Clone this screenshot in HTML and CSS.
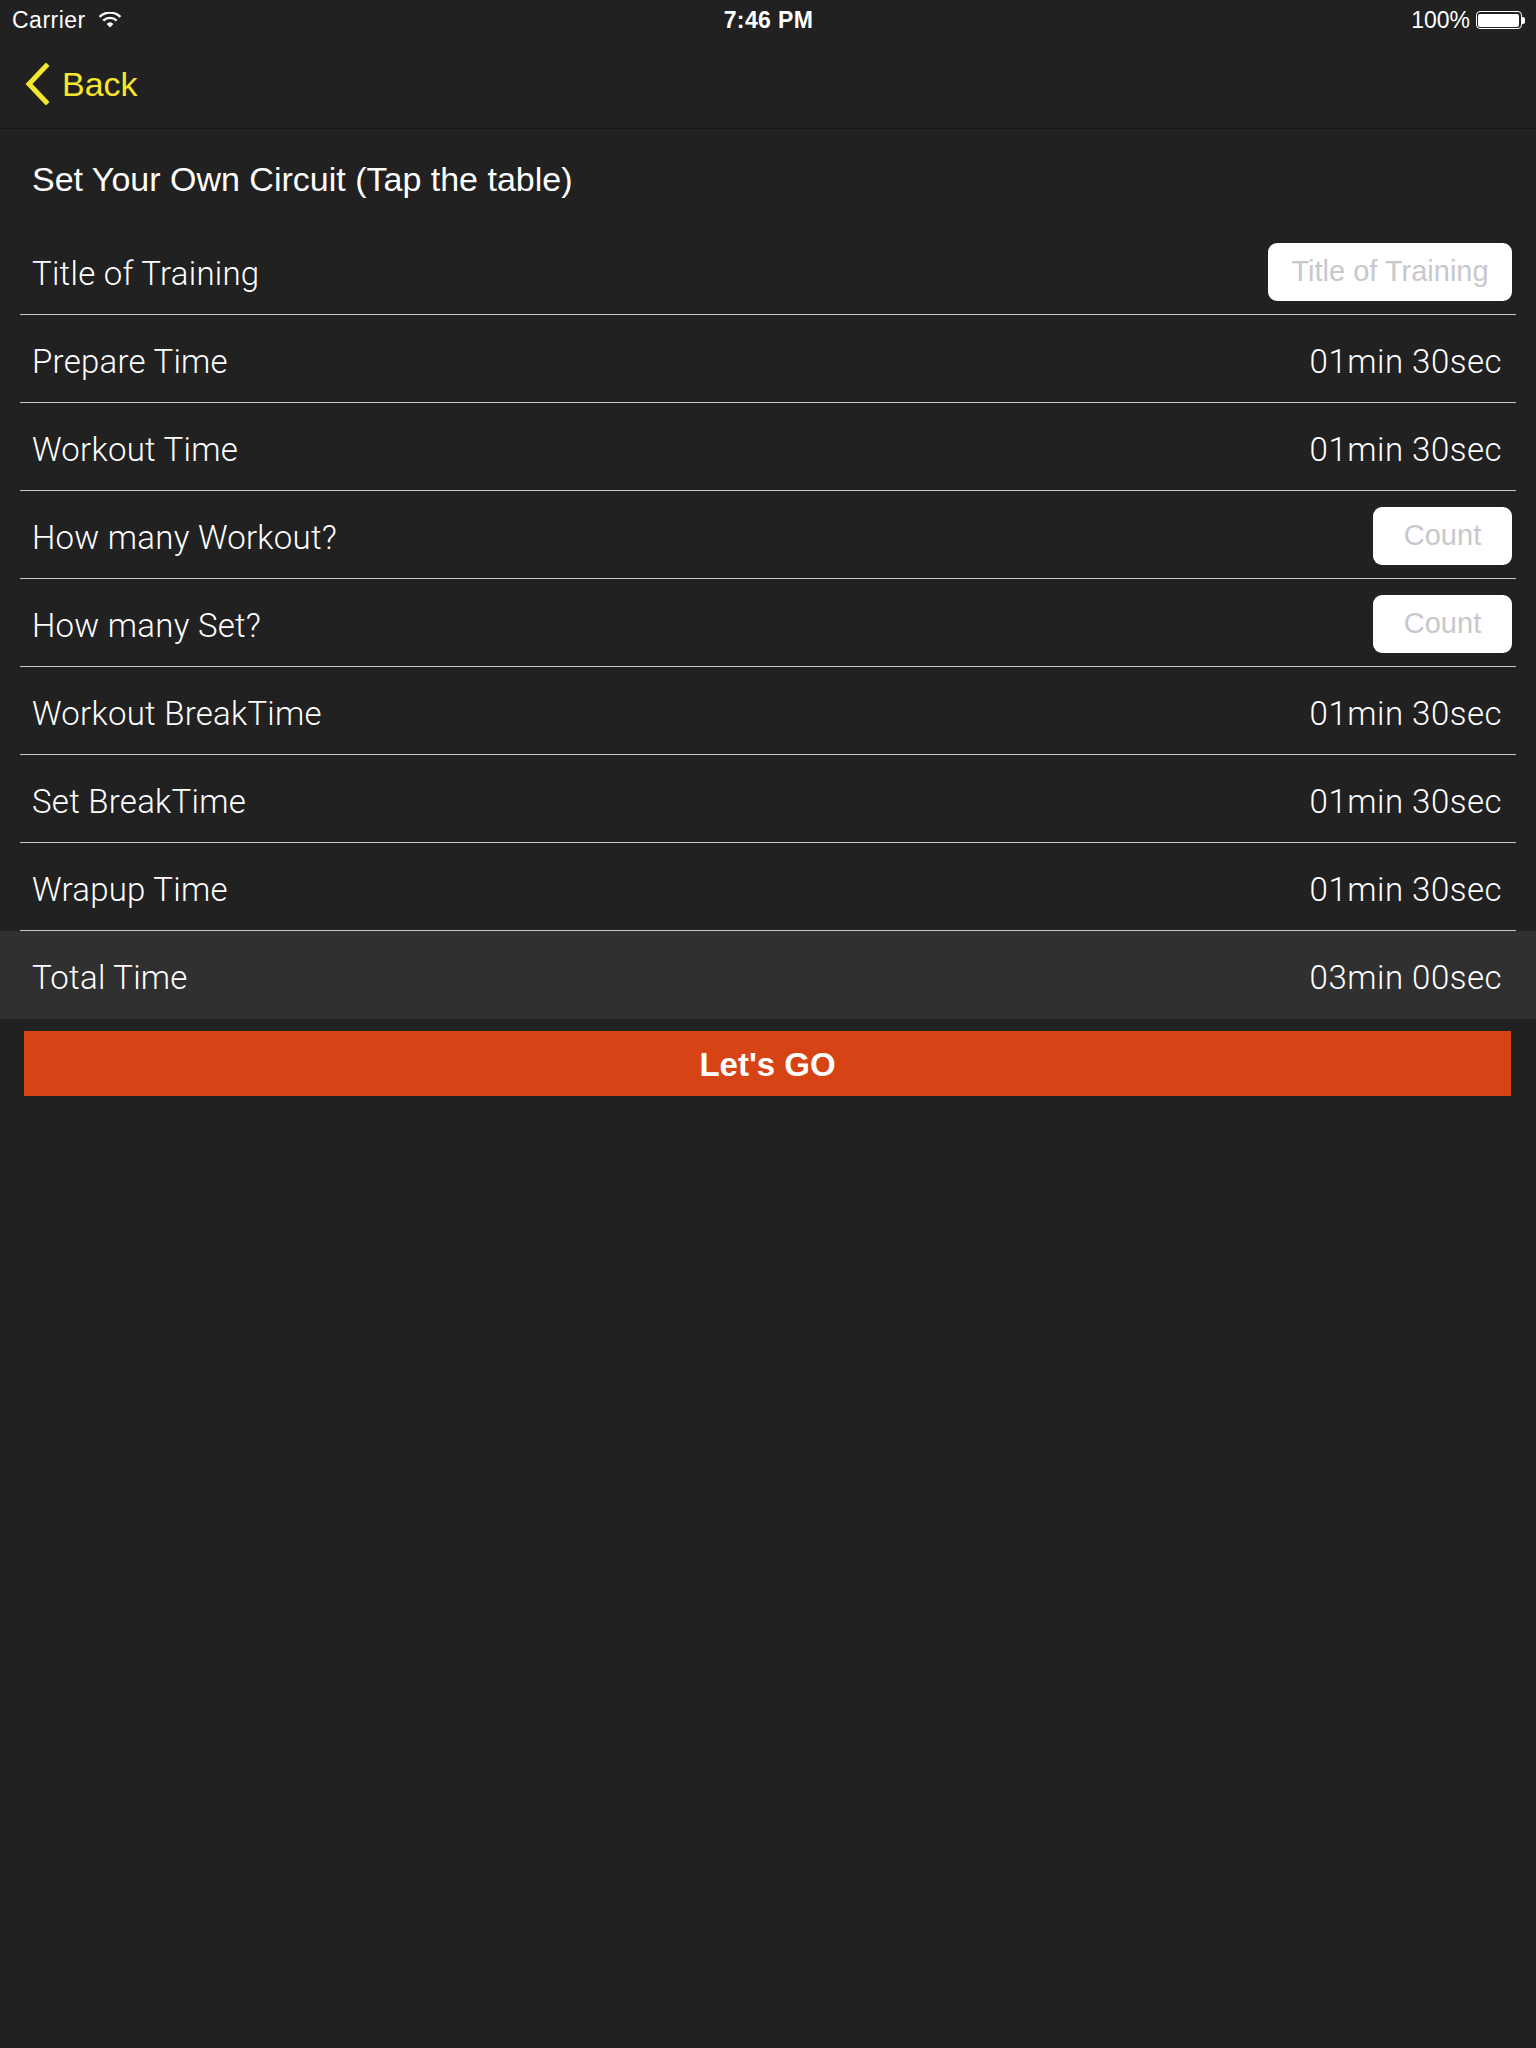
FILE: index.html
```html
<!DOCTYPE html>
<html lang="en">
<head>
<meta charset="utf-8">
<title>Set Your Own Circuit</title>
<link rel="stylesheet" href="styles.css">
</head>
<body>
<div class="screen">
  <div class="statusbar">
    <div class="sb-left">
      <span class="carrier">Carrier</span>
      <svg class="wifi" width="24" height="16" viewBox="0 0 24 16">
        <path d="M12 15.5 L8.6 11.9 A5 5 0 0 1 15.4 11.9 Z" fill="#fff"/>
        <path d="M5.3 8.6 A9.6 9.6 0 0 1 18.7 8.6" fill="none" stroke="#fff" stroke-width="2.4"/>
        <path d="M1.6 4.9 A14.8 14.8 0 0 1 22.4 4.9" fill="none" stroke="#fff" stroke-width="2.4"/>
      </svg>
    </div>
    <div class="sb-time">7:46 PM</div>
    <div class="sb-right">
      <span class="pct">100%</span>
      <span class="battery"><span class="battery-fill"></span></span>
      <span class="battery-nub"></span>
    </div>
  </div>

  <div class="navbar">
    <div class="back">
      <svg class="chevron" width="26" height="42" viewBox="0 0 26 42">
        <path d="M22 3 L5 21 L22 39" fill="none" stroke="#f7e62e" stroke-width="5" stroke-linecap="square" stroke-linejoin="miter"/>
      </svg>
      <span class="back-label">Back</span>
    </div>
  </div>

  <div class="section-title">Set Your Own Circuit (Tap the table)</div>

  <div class="table">
    <div class="row"><span class="label">Title of Training</span><span class="field field-wide">Title of Training</span></div>
    <div class="row"><span class="label">Prepare Time</span><span class="value">01min 30sec</span></div>
    <div class="row"><span class="label">Workout Time</span><span class="value">01min 30sec</span></div>
    <div class="row"><span class="label">How many Workout?</span><span class="field field-count">Count</span></div>
    <div class="row"><span class="label">How many Set?</span><span class="field field-count">Count</span></div>
    <div class="row"><span class="label">Workout BreakTime</span><span class="value">01min 30sec</span></div>
    <div class="row"><span class="label">Set BreakTime</span><span class="value">01min 30sec</span></div>
    <div class="row"><span class="label">Wrapup Time</span><span class="value">01min 30sec</span></div>
  </div>

  <div class="total-row"><span class="label">Total Time</span><span class="value">03min 00sec</span></div>

  <div class="go-button">Let's GO</div>
</div>
</body>
</html>
```

FILE: styles.css
```css
* { box-sizing: border-box; }
html, body {
  margin: 0;
  padding: 0;
  background: #212121;
}
body {
  width: 1536px;
  height: 2048px;
  font-family: "Liberation Sans", Arial, sans-serif;
  color: #fff;
  overflow: hidden;
}
.screen {
  display: flex;
  flex-direction: column;
}
.statusbar {
  height: 40px;
  display: flex;
  align-items: center;
  justify-content: space-between;
  padding: 0 11px 0 12px;
  font-size: 23px;
}
.sb-left {
  display: flex;
  align-items: center;
  gap: 12px;
  width: 300px;
}
.carrier { letter-spacing: 0.5px; }
.sb-time {
  font-weight: bold;
  letter-spacing: 0.4px;
}
.sb-right {
  display: flex;
  align-items: center;
  justify-content: flex-end;
  width: 300px;
}
.pct { margin-right: 6px; }
.battery {
  width: 46px;
  height: 18px;
  border: 1.5px solid #fff;
  border-radius: 4px;
  padding: 1.5px;
  display: flex;
}
.battery-fill {
  flex: 1;
  background: #fff;
  border-radius: 2px;
}
.battery-nub {
  width: 3px;
  height: 7px;
  background: #fff;
  border-radius: 0 2px 2px 0;
}
.navbar {
  height: 89px;
  border-bottom: 1px solid #151515;
  display: flex;
  align-items: center;
  padding-left: 24px;
}
.back {
  display: flex;
  align-items: center;
  gap: 12px;
}
.chevron { display: block; }
.back-label {
  color: #f7e62e;
  font-size: 34px;
}
.section-title {
  height: 98px;
  display: flex;
  align-items: center;
  padding-left: 32px;
  font-size: 34px;
  padding-top: 2px;
}
.table {
  display: flex;
  flex-direction: column;
}
.row {
  height: 88px;
  margin: 0 20px;
  border-bottom: 1.5px solid #c9c9c9;
  display: flex;
  align-items: center;
  justify-content: space-between;
  padding: 0 14px 0 12px;
}
.label, .value {
  font-family: Roboto, "Liberation Sans", sans-serif;
  font-weight: 300;
  font-size: 33px;
  letter-spacing: 0.25px;
  padding-top: 5px;
}
.value { letter-spacing: 0.5px; }
.field {
  background: #fff;
  border-radius: 9px;
  height: 58px;
  display: flex;
  align-items: center;
  justify-content: center;
  color: #c7c7cd;
  font-family: "Liberation Sans", Arial, sans-serif;
  font-size: 29px;
  margin-right: -10px;
  margin-top: 2px;
}
.field-wide { width: 244px; }
.field-count { width: 139px; }
.total-row {
  height: 88px;
  background: #303030;
  display: flex;
  align-items: center;
  justify-content: space-between;
  padding: 0 34px 0 32px;
}
.go-button {
  margin: 12px 25px 0 24px;
  height: 65px;
  background: #d64315;
  display: flex;
  align-items: center;
  justify-content: center;
  font-size: 33px;
  font-weight: bold;
  color: #fff;
  padding-top: 3px;
}
```
